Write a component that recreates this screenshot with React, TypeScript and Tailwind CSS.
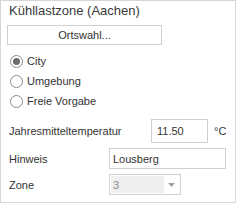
import React from "react";

function Radio({ checked, label }: { checked?: boolean; label: string }) {
  return (
    <div className="flex items-center h-[20px] gap-[4px]">
      <span className="w-[13px] h-[13px] rounded-full border border-[#8a8a8a] bg-white flex items-center justify-center">
        {checked && <span className="w-[7px] h-[7px] rounded-full bg-[#6b6b6b]" />}
      </span>
      <span>{label}</span>
    </div>
  );
}

export default function App() {
  return (
    <div
      className="w-[236px] h-[203px] border border-[#d6d6d6] bg-white text-[#333333] text-[11px] leading-[14px] pl-[6px] pt-[2px]"
      style={{ fontFamily: '"Liberation Sans", Arial, sans-serif' }}
    >
      <div className="text-[13px] leading-[16px] pl-[2px] text-[#3a3a3a]">Kühllastzone (Aachen)</div>
      <button className="mt-[6px] w-[155px] h-[20px] border border-[#d0d0d0] bg-white text-[11px] text-[#333333] flex items-center justify-center">
        Ortswahl...
      </button>
      <div className="mt-[6px] pl-[3px] flex flex-col gap-[0px]">
        <Radio checked label="City" />
        <Radio label="Umgebung" />
        <Radio label="Freie Vorgabe" />
      </div>
      <div className="mt-[8px] flex items-center h-[24px] pl-[2px]">
        <span className="w-[142px]">Jahresmitteltemperatur</span>
        <div className="w-[57px] h-[24px] border border-[#d0d0d0] flex items-center pl-[5px]">11.50</div>
        <span className="ml-[6px]">°C</span>
      </div>
      <div className="mt-[5px] flex items-center h-[21px] pl-[2px]">
        <span className="w-[100px]">Hinweis</span>
        <div className="w-[117px] h-[21px] border border-[#d0d0d0] flex items-center pl-[3px]">Lousberg</div>
      </div>
      <div className="mt-[5px] flex items-center h-[21px] pl-[2px]">
        <span className="w-[100px]">Zone</span>
        <div className="w-[72px] h-[21px] border border-[#d0d0d0] flex items-center p-[1px]">
          <div className="w-[53px] h-full bg-[#efefef] flex items-center pl-[2px] text-[#8a8a8a]">3</div>
          <div className="flex-1 flex items-center justify-center">
            <svg width="7" height="4" viewBox="0 0 7 4"><path d="M0 0h7L3.5 4z" fill="#a0a0a0" /></svg>
          </div>
        </div>
      </div>
    </div>
  );
}
